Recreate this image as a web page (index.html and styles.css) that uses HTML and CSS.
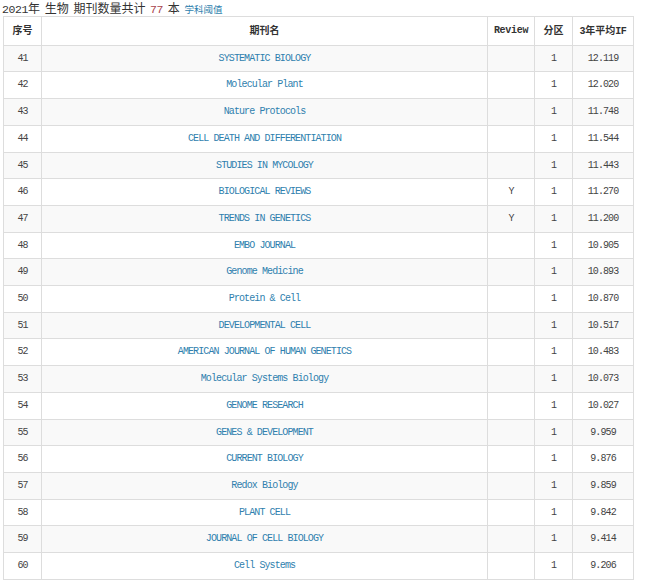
FILE: index.html
```html
<!DOCTYPE html>
<html>
<head>
<meta charset="utf-8">
<link rel="stylesheet" href="styles.css">
</head>
<body>
<div class="title"><span class="n">2021</span>年 生物 期刊数量共计 <span class="n red">77</span> 本 <a class="sub">学科阈值</a></div>
<table class="tbl">
<colgroup><col class="c1"><col class="c2"><col class="c3"><col class="c4"><col class="c5"></colgroup>
<thead>
<tr><th><span class="cjk">序号</span></th><th><span class="cjk">期刊名</span></th><th>Review</th><th><span class="cjk">分区</span></th><th>3<span class="cjk">年平均</span>IF</th></tr>
</thead>
<tbody>
<tr><td>41</td><td><a>SYSTEMATIC BIOLOGY</a></td><td></td><td>1</td><td>12.119</td></tr>
<tr><td>42</td><td><a>Molecular Plant</a></td><td></td><td>1</td><td>12.020</td></tr>
<tr><td>43</td><td><a>Nature Protocols</a></td><td></td><td>1</td><td>11.748</td></tr>
<tr><td>44</td><td><a>CELL DEATH AND DIFFERENTIATION</a></td><td></td><td>1</td><td>11.544</td></tr>
<tr><td>45</td><td><a>STUDIES IN MYCOLOGY</a></td><td></td><td>1</td><td>11.443</td></tr>
<tr><td>46</td><td><a>BIOLOGICAL REVIEWS</a></td><td>Y</td><td>1</td><td>11.270</td></tr>
<tr><td>47</td><td><a>TRENDS IN GENETICS</a></td><td>Y</td><td>1</td><td>11.200</td></tr>
<tr><td>48</td><td><a>EMBO JOURNAL</a></td><td></td><td>1</td><td>10.905</td></tr>
<tr><td>49</td><td><a>Genome Medicine</a></td><td></td><td>1</td><td>10.893</td></tr>
<tr><td>50</td><td><a>Protein &amp; Cell</a></td><td></td><td>1</td><td>10.870</td></tr>
<tr><td>51</td><td><a>DEVELOPMENTAL CELL</a></td><td></td><td>1</td><td>10.517</td></tr>
<tr><td>52</td><td><a>AMERICAN JOURNAL OF HUMAN GENETICS</a></td><td></td><td>1</td><td>10.483</td></tr>
<tr><td>53</td><td><a>Molecular Systems Biology</a></td><td></td><td>1</td><td>10.073</td></tr>
<tr><td>54</td><td><a>GENOME RESEARCH</a></td><td></td><td>1</td><td>10.027</td></tr>
<tr><td>55</td><td><a>GENES &amp; DEVELOPMENT</a></td><td></td><td>1</td><td>9.959</td></tr>
<tr><td>56</td><td><a>CURRENT BIOLOGY</a></td><td></td><td>1</td><td>9.876</td></tr>
<tr><td>57</td><td><a>Redox Biology</a></td><td></td><td>1</td><td>9.859</td></tr>
<tr><td>58</td><td><a>PLANT CELL</a></td><td></td><td>1</td><td>9.842</td></tr>
<tr><td>59</td><td><a>JOURNAL OF CELL BIOLOGY</a></td><td></td><td>1</td><td>9.414</td></tr>
<tr><td>60</td><td><a>Cell Systems</a></td><td></td><td>1</td><td>9.206</td></tr>
</tbody>
</table>
</body>
</html>
```
FILE: styles.css
```css
html, body {
  margin: 0;
  padding: 0;
  background: #fff;
}
body {
  font-family: "Noto Sans CJK SC", sans-serif;
  color: #333;
}
.title {
  height: 16px;
  line-height: 16px;
  padding-left: 2px;
  font-size: 12px;
  color: #333;
  white-space: nowrap;
  word-spacing: 2px;
}
.title .n {
  font-family: "Liberation Mono", monospace;
  font-size: 11.5px;
  letter-spacing: -0.4px;
}
.title .red {
  color: #a8424c;
}
.title .sub {
  font-size: 9.5px;
  color: #2f7fae;
}
.tbl {
  margin-left: 3px;
  width: 630px;
  table-layout: fixed;
  border-collapse: collapse;
  font-family: "Liberation Mono", "Noto Sans CJK SC", monospace;
  font-size: 10px;
  letter-spacing: -0.9px;
  color: #444;
}
.c1 { width: 38px; }
.c2 { width: 446px; }
.c3 { width: 47px; }
.c4 { width: 38px; }
.c5 { width: 61px; }
.tbl th, .tbl td {
  border: 1px solid #dddddd;
  padding: 4px 2px;
  line-height: 17.7px;
  text-align: center;
  white-space: nowrap;
  overflow: hidden;
}
.tbl th {
  font-weight: bold;
  color: #333;
  letter-spacing: -0.3px;
}
.tbl .cjk {
  font-family: "Noto Sans CJK SC", sans-serif;
  font-size: 10px;
  letter-spacing: 0;
}
.tbl tbody tr:nth-child(odd) {
  background: #f9f9f9;
}
.tbl a {
  color: #2f7fae;
}
```
